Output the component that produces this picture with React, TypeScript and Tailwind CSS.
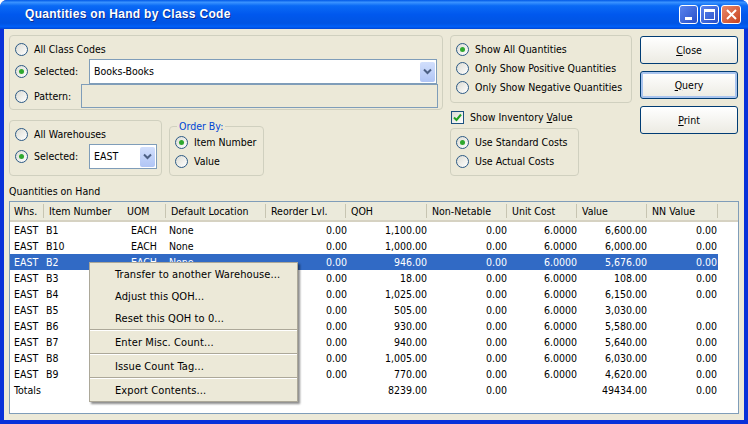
const rowCols = 'grid grid-cols-[34px_78px_44px_100px_80px_81px_80px_70px_70px_71px]'

const rows = [
  ['EAST', 'B1', 'EACH', 'None', '0.00', '1,100.00', '0.00', '6.0000', '6,600.00', '0.00'],
  ['EAST', 'B10', 'EACH', 'None', '0.00', '1,000.00', '0.00', '6.0000', '6,000.00', '0.00'],
  ['EAST', 'B2', 'EACH', 'None', '0.00', '946.00', '0.00', '6.0000', '5,676.00', '0.00'],
  ['EAST', 'B3', 'EACH', 'None', '0.00', '18.00', '0.00', '6.0000', '108.00', '0.00'],
  ['EAST', 'B4', 'EACH', 'None', '0.00', '1,025.00', '0.00', '6.0000', '6,150.00', '0.00'],
  ['EAST', 'B5', 'EACH', 'None', '0.00', '505.00', '0.00', '6.0000', '3,030.00', ''],
  ['EAST', 'B6', 'EACH', 'None', '0.00', '930.00', '0.00', '6.0000', '5,580.00', '0.00'],
  ['EAST', 'B7', 'EACH', 'None', '0.00', '940.00', '0.00', '6.0000', '5,640.00', '0.00'],
  ['EAST', 'B8', 'EACH', 'None', '0.00', '1,005.00', '0.00', '6.0000', '6,030.00', '0.00'],
  ['EAST', 'B9', 'EACH', 'None', '0.00', '770.00', '0.00', '6.0000', '4,620.00', '0.00'],
]

const headers = [
  { label: 'Whs.', className: 'pl-[4px] border-r border-[#c7c5b2]' },
  { label: 'Item Number', className: 'pl-[5px]' },
  { label: 'UOM', className: 'pl-[5px] border-r border-[#c7c5b2]' },
  { label: 'Default Location', className: 'pl-[5px] border-r border-[#c7c5b2]' },
  { label: 'Reorder Lvl.', className: 'pl-[5px] border-r border-[#c7c5b2]' },
  { label: 'QOH', className: 'pl-[5px] border-r border-[#c7c5b2]' },
  { label: 'Non-Netable', className: 'pl-[5px] border-r border-[#c7c5b2]' },
  { label: 'Unit Cost', className: 'pl-[5px] border-r border-[#c7c5b2]' },
  { label: 'Value', className: 'pl-[5px] border-r border-[#c7c5b2]' },
  { label: 'NN Value', className: 'pl-[5px] border-r border-[#c7c5b2]' },
]

function Radio({ label, checked, className = '' }: { label: string; checked?: boolean; className?: string }) {
  return (
    <div className={`flex items-center gap-[6px] ${className}`}>
      <span className="flex h-[13px] w-[13px] shrink-0 items-center justify-center rounded-full border border-[#2c5a85] bg-gradient-to-br from-[#dcdcd4] to-white">
        {checked && <span className="h-[5px] w-[5px] rounded-full bg-[#2fa82f]" />}
      </span>
      <span>{label}</span>
    </div>
  )
}

function Chevron() {
  return (
    <svg width="9" height="7" viewBox="0 0 9 7">
      <path d="M1 1.5 L4.5 5 L8 1.5" fill="none" stroke="#4d6185" strokeWidth="2" />
    </svg>
  )
}

function Combo({ value, className }: { value: string; className: string }) {
  return (
    <div className={`flex items-center justify-between border border-[#7f9db9] bg-white pl-[4px] pr-[1px] ${className}`}>
      <span>{value}</span>
      <span className="flex h-[20px] w-[15px] items-center justify-center rounded-[2px] bg-gradient-to-b from-[#d2dffc] to-[#b0c5f5]">
        <Chevron />
      </span>
    </div>
  )
}

function Button({ first, rest, isDefault }: { first: string; rest: string; isDefault?: boolean }) {
  return (
    <button
      className={`h-[28px] w-[98px] rounded-[3px] border border-[#003c74] bg-gradient-to-b from-white to-[#ecebe3] ${
        isDefault ? 'shadow-[inset_0_0_0_2px_#a9c4ee]' : ''
      }`}
    >
      <span className="underline">{first}</span>
      {rest}
    </button>
  )
}

function WindowButton({ className, children }: { className: string; children: React.ReactNode }) {
  return (
    <div className={`flex h-[19px] items-center justify-center rounded-[3px] border border-white ${className}`}>
      {children}
    </div>
  )
}

function ContextMenu() {
  const groups = [
    ['Transfer to another Warehouse...', 'Adjust this QOH...', 'Reset this QOH to 0...'],
    ['Enter Misc. Count...'],
    ['Issue Count Tag...'],
    ['Export Contents...'],
  ]
  return (
    <div className="absolute left-[79px] top-[60px] w-[209px] border border-[#aca899] bg-[#ece9d8] text-[11px] tracking-[0.1px] shadow-[2px_2px_2px_rgba(0,0,0,0.45)]">
      {groups.map((items, i) => (
        <div key={i} className={i > 0 ? 'border-t border-[#aca899]' : ''}>
          <div className={i > 0 ? 'border-t border-white' : ''}>
            {items.map((item) => (
              <div key={item} className="flex h-[22px] items-center pl-[25px]">
                {item}
              </div>
            ))}
          </div>
        </div>
      ))}
    </div>
  )
}

export default function App() {
  return (
    <div className="flex h-[424px] w-[748px] flex-col overflow-hidden rounded-t-[7px] bg-[#0831d9] font-['DejaVu_Sans_Condensed','DejaVu_Sans',sans-serif] text-[10.5px] leading-[13px] text-black">

      {/* TITLE BAR */}

      <div className="flex h-[29px] shrink-0 items-center justify-between bg-[linear-gradient(to_bottom,#0058e6_0%,#3a93ff_8%,#0a6af5_20%,#0058ee_50%,#0054e3_80%,#0060f8_92%,#0046d5_100%)] pl-[25px] pr-[7px]">
        <span className="font-['Liberation_Sans',sans-serif] text-[12px] font-bold tracking-[0.3px] text-white [text-shadow:1px_1px_0_#0f2f8f]">
          Quantities on Hand by Class Code
        </span>
        <div className="flex gap-[2px]">
          <WindowButton className="w-[19px] items-end bg-gradient-to-br from-[#5a84ee] to-[#2a4fc8] pb-[3px]">
            <span className="h-[3px] w-[7px] bg-white" />
          </WindowButton>
          <WindowButton className="w-[19px] bg-gradient-to-br from-[#5a84ee] to-[#2a4fc8]">
            <span className="h-[11px] w-[11px] border border-t-[3px] border-white" />
          </WindowButton>
          <WindowButton className="w-[20px] bg-gradient-to-br from-[#e8886a] to-[#c8401a]">
            <svg width="11" height="11" viewBox="0 0 11 11">
              <path d="M1 1 L10 10 M10 1 L1 10" stroke="white" strokeWidth="2" />
            </svg>
          </WindowButton>
        </div>
      </div>

      {/* WINDOW BODY */}

      <div className="mx-[4px] mb-[4px] flex min-h-0 flex-1 flex-col bg-[#ece9d8] px-[5px] pb-[6px] pt-[6px]">

        <div className="flex">

          {/* CLASS CODE + WAREHOUSE */}

          <div className="w-[434px] shrink-0">
            <div className="h-[75px] rounded-[4px] border border-[#d0d0bf] pl-[5px] pt-[5px]">
              <Radio label="All Class Codes" className="h-[16px]" />
              <div className="mt-[2px] flex h-[25px] items-center">
                <Radio label="Selected:" checked className="w-[74px]" />
                <Combo value="Books-Books" className="h-[25px] w-[348px]" />
              </div>
              <div className="flex h-[24px] items-center">
                <Radio label="Pattern:" className="w-[66px]" />
                <div className="h-[24px] w-[357px] border border-[#7f9db9]" />
              </div>
            </div>

            <div className="mt-[10px] flex items-start gap-[7px]">
              <div className="h-[56px] w-[153px] rounded-[4px] border border-[#d0d0bf] pl-[5px] pt-[5px]">
                <Radio label="All Warehouses" className="h-[16px]" />
                <div className="mt-[2px] flex h-[25px] items-center">
                  <Radio label="Selected:" checked className="w-[74px]" />
                  <Combo value="EAST" className="h-[25px] w-[68px]" />
                </div>
              </div>
              <div className="relative mt-[6px] h-[50px] w-[95px] rounded-[4px] border border-[#d0d0bf] pl-[5px] pt-[7px]">
                <span className="absolute left-[7px] top-[-7px] bg-[#ece9d8] px-[2px] text-[#0046d5]">Order By:</span>
                <Radio label="Item Number" checked className="h-[16px]" />
                <Radio label="Value" className="mt-[3px] h-[16px]" />
              </div>
            </div>
          </div>

          {/* QUANTITY OPTIONS */}

          <div className="ml-[7px] w-[182px] shrink-0">
            <div className="h-[68px] rounded-[4px] border border-[#d0d0bf] pl-[5px] pt-[5px]">
              <Radio label="Show All Quantities" checked className="h-[16px]" />
              <Radio label="Only Show Positive Quantities" className="mt-[3px] h-[16px]" />
              <Radio label="Only Show Negative Quantities" className="mt-[3px] h-[16px]" />
            </div>
            <div className="mt-[7px] flex h-[14px] items-center gap-[6px] pl-[1px]">
              <span className="flex h-[13px] w-[13px] items-center justify-center border border-[#1c5180] bg-gradient-to-br from-[#dcdcd4] to-white">
                <svg width="9" height="9" viewBox="0 0 9 9">
                  <path d="M1 4.5 L3.5 7 L8 1.5" fill="none" stroke="#21a121" strokeWidth="2" />
                </svg>
              </span>
              <span>
                Show Inventory <span className="underline">V</span>alue
              </span>
            </div>
            <div className="mt-[4px] h-[48px] w-[129px] rounded-[4px] border border-[#d0d0bf] pl-[5px] pt-[5px]">
              <Radio label="Use Standard Costs" checked className="h-[16px]" />
              <Radio label="Use Actual Costs" className="mt-[3px] h-[16px]" />
            </div>
          </div>

          {/* BUTTONS */}

          <div className="ml-[8px] flex flex-col gap-[7px] pt-[1px]">
            <Button first="C" rest="lose" />
            <Button first="Q" rest="uery" isDefault />
            <Button first="P" rest="rint" />
          </div>

        </div>

        <div className="mt-[9px] h-[16px]">Quantities on Hand</div>

        {/* TABLE */}

        <div className="relative min-h-0 flex-1 border border-[#7f9db9] bg-white">
          <div className="h-[20px] border-b-[2px] border-[#d6d2c2] bg-[#ebeadb]">
            <div className={`${rowCols} h-[18px] items-center`}>
              {headers.map((h) => (
                <div key={h.label} className={`flex h-[14px] items-center ${h.className}`}>
                  {h.label}
                </div>
              ))}
            </div>
          </div>

          {rows.map((row, i) => (
            <div
              key={row[1]}
              className={`${rowCols} h-[16px] w-[708px] items-center ${i === 2 ? 'bg-[#316ac5] text-white' : ''}`}
            >
              <div className="pl-[4px]">{row[0]}</div>
              <div className="pl-[2px]">{row[1]}</div>
              <div className="pl-[9px]">{row[2]}</div>
              <div className="pl-[3px]">{row[3]}</div>
              <div className="mr-[-1px] text-right">{row[4]}</div>
              <div className="text-right">{row[5]}</div>
              <div className="text-right">{row[6]}</div>
              <div className="text-right">{row[7]}</div>
              <div className="text-right">{row[8]}</div>
              <div className="pr-[1px] text-right">{row[9]}</div>
            </div>
          ))}

          <div className={`${rowCols} h-[16px] w-[708px] items-center`}>
            <div className="col-span-5 pl-[4px]">Totals</div>
            <div className="text-right">8239.00</div>
            <div className="text-right">0.00</div>
            <div />
            <div className="text-right">49434.00</div>
            <div className="pr-[1px] text-right">0.00</div>
          </div>

          <ContextMenu />
        </div>

      </div>
    </div>
  )
}
